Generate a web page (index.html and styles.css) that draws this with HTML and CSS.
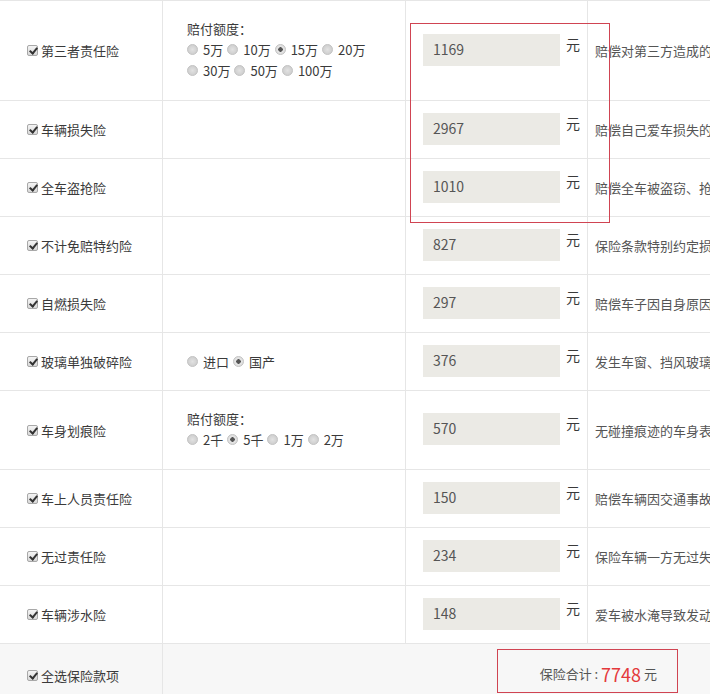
FILE: index.html
```html
<!DOCTYPE html>
<html lang="zh-CN">
<head>
    <meta charset="UTF-8">
    <title>车险计算</title>
    <link rel="stylesheet" href="styles.css">
</head>
<body>

    <div class="calc-wrap">
        <table class="ins-table">
            <colgroup>
                <col class="col-name">
                <col class="col-opt">
                <col class="col-price">
                <col class="col-desc">
            </colgroup>
            <tr class="row-tall">
                <td class="name"><label><input type="checkbox" class="chk" checked>第三者责任险</label></td>
                <td class="opt">
                    <div class="opt-title">赔付额度：</div>
                    <div class="radios">
                        <label><input type="radio" name="sz" class="rad">5万</label>
                        <label><input type="radio" name="sz" class="rad">10万</label>
                        <label><input type="radio" name="sz" class="rad" checked>15万</label>
                        <label><input type="radio" name="sz" class="rad">20万</label>
                    </div>
                    <div class="radios">
                        <label><input type="radio" name="sz" class="rad">30万</label>
                        <label><input type="radio" name="sz" class="rad">50万</label>
                        <label><input type="radio" name="sz" class="rad">100万</label>
                    </div>
                </td>
                <td class="price"><span class="price-box">1169</span><span class="yuan">元</span></td>
                <td class="desc">赔偿对第三方造成的人身伤亡或财产损失</td>
            </tr>
            <tr>
                <td class="name"><label><input type="checkbox" class="chk" checked>车辆损失险</label></td>
                <td class="opt"></td>
                <td class="price"><span class="price-box">2967</span><span class="yuan">元</span></td>
                <td class="desc">赔偿自己爱车损失的费用</td>
            </tr>
            <tr>
                <td class="name"><label><input type="checkbox" class="chk" checked>全车盗抢险</label></td>
                <td class="opt"></td>
                <td class="price"><span class="price-box">1010</span><span class="yuan">元</span></td>
                <td class="desc">赔偿全车被盗窃、抢劫、抢夺造成的损失</td>
            </tr>
            <tr>
                <td class="name"><label><input type="checkbox" class="chk" checked>不计免赔特约险</label></td>
                <td class="opt"></td>
                <td class="price"><span class="price-box">827</span><span class="yuan">元</span></td>
                <td class="desc">保险条款特别约定损失由保险公司全部赔偿</td>
            </tr>
            <tr>
                <td class="name"><label><input type="checkbox" class="chk" checked>自燃损失险</label></td>
                <td class="opt"></td>
                <td class="price"><span class="price-box">297</span><span class="yuan">元</span></td>
                <td class="desc">赔偿车子因自身原因起火造成的损失</td>
            </tr>
            <tr>
                <td class="name"><label><input type="checkbox" class="chk" checked>玻璃单独破碎险</label></td>
                <td class="opt">
                    <div class="radios">
                        <label><input type="radio" name="glass" class="rad">进口</label>
                        <label><input type="radio" name="glass" class="rad" checked>国产</label>
                    </div>
                </td>
                <td class="price"><span class="price-box">376</span><span class="yuan">元</span></td>
                <td class="desc">发生车窗、挡风玻璃单独破碎的损失</td>
            </tr>
            <tr class="row-mid">
                <td class="name"><label><input type="checkbox" class="chk" checked>车身划痕险</label></td>
                <td class="opt">
                    <div class="opt-title">赔付额度：</div>
                    <div class="radios">
                        <label><input type="radio" name="scratch" class="rad">2千</label>
                        <label><input type="radio" name="scratch" class="rad" checked>5千</label>
                        <label><input type="radio" name="scratch" class="rad">1万</label>
                        <label><input type="radio" name="scratch" class="rad">2万</label>
                    </div>
                </td>
                <td class="price"><span class="price-box">570</span><span class="yuan">元</span></td>
                <td class="desc">无碰撞痕迹的车身表面油漆单独划伤</td>
            </tr>
            <tr>
                <td class="name"><label><input type="checkbox" class="chk" checked>车上人员责任险</label></td>
                <td class="opt"></td>
                <td class="price"><span class="price-box">150</span><span class="yuan">元</span></td>
                <td class="desc">赔偿车辆因交通事故造成的车上人员伤亡</td>
            </tr>
            <tr>
                <td class="name"><label><input type="checkbox" class="chk" checked>无过责任险</label></td>
                <td class="opt"></td>
                <td class="price"><span class="price-box">234</span><span class="yuan">元</span></td>
                <td class="desc">保险车辆一方无过失时的赔偿费用</td>
            </tr>
            <tr>
                <td class="name"><label><input type="checkbox" class="chk" checked>车辆涉水险</label></td>
                <td class="opt"></td>
                <td class="price"><span class="price-box">148</span><span class="yuan">元</span></td>
                <td class="desc">爱车被水淹导致发动机损坏的维修费用</td>
            </tr>
            <tr class="row-total">
                <td class="name"><label><input type="checkbox" class="chk" checked>全选保险款项</label></td>
                <td class="total-cell" colspan="3">
                    <div class="total-box">保险合计 : <span class="total-num">7748</span> 元</div>
                </td>
            </tr>
        </table>

        <!-- highlight around the first three prices -->
        <div class="mark-box"></div>
    </div>

</body>
</html>
```

FILE: styles.css
```css
html, body {
    margin: 0;
    padding: 0;
    overflow: hidden;
}
body {
    font-family: "Noto Sans CJK SC", "Noto Sans", sans-serif;
    font-size: 13px;
    color: #3a3a3a;
    background-color: #fff;
}
.calc-wrap {
    position: relative;
    width: 710px;
    overflow: hidden;
}
.ins-table {
    border-collapse: collapse;
    table-layout: fixed;
    width: 900px;
    margin-left: -1px;
}
.col-name { width: 163px; }
.col-opt { width: 243px; }
.col-price { width: 182px; }
.col-desc { width: 312px; }

.ins-table td {
    border: 1px solid #e6e6e6;
    height: 57px;
    padding: 0;
    vertical-align: middle;
}
.row-tall td { height: 99px; }
.row-mid td { height: 78px; }

.name {
    padding-left: 27px !important;
    white-space: nowrap;
}
.name label {
    display: flex;
    align-items: center;
}
.opt {
    padding-left: 24px !important;
    line-height: 21px;
}
.opt-title {
    margin-top: -2px;
}
.radios {
    display: flex;
    align-items: center;
}
.radios label {
    display: flex;
    align-items: center;
    margin-right: 4px;
}
.price {
    padding-left: 17px !important;
    white-space: nowrap;
}
.price-box {
    display: inline-block;
    width: 127px;
    height: 32px;
    line-height: 31px;
    padding-left: 10px;
    background-color: #ebeae5;
    color: #555;
    font-size: 14px;
    vertical-align: middle;
    position: relative;
    top: -1px;
}
.yuan {
    display: inline-block;
    margin-left: 6px;
    vertical-align: middle;
    position: relative;
    top: -7px;
    font-size: 14px;
}
.desc {
    padding-left: 7px !important;
    white-space: nowrap;
    overflow: hidden;
    color: #555;
}

/* checkbox */
.chk {
    appearance: none;
    -webkit-appearance: none;
    position: relative;
    width: 11px;
    height: 11px;
    margin: 0 3px 0 0;
    border: 1px solid #a8a8a8;
    border-radius: 2px;
    background: linear-gradient(#f4f4f4, #d8d8d8);
    flex-shrink: 0;
}
.chk:checked::after {
    content: "";
    position: absolute;
    left: 3px;
    top: 0px;
    width: 3px;
    height: 6px;
    border: solid #333;
    border-width: 0 2px 2px 0;
    transform: rotate(40deg);
}

/* radio */
.rad {
    appearance: none;
    -webkit-appearance: none;
    position: relative;
    width: 11px;
    height: 11px;
    margin: 0 5px 0 0;
    border: 1px solid #c4c4c4;
    border-radius: 50%;
    background: radial-gradient(circle, #e2e2e2 0, #d2d2d2 60%, #c8c8c8 100%);
    flex-shrink: 0;
}
.rad:checked {
    background: radial-gradient(circle, #555 0, #555 2px, #e6e6e6 2.5px, #d4d4d4 100%);
}

/* total row */
.row-total td {
    background-color: #f7f7f7;
}
.total-cell {
    vertical-align: top !important;
    padding-top: 5px !important;
}
.total-box {
    box-sizing: border-box;
    display: flex;
    align-items: center;
    justify-content: flex-end;
    width: 181px;
    height: 44px;
    margin-left: 334px;
    padding: 5px 20px 0 0;
    border: 1px solid #d04452;
    color: #555;
    white-space: pre;
}
.total-num {
    color: #e4393c;
    font-size: 18px;
}

.mark-box {
    position: absolute;
    left: 410px;
    top: 23px;
    width: 198px;
    height: 198px;
    border: 1px solid #d04452;
}
```
